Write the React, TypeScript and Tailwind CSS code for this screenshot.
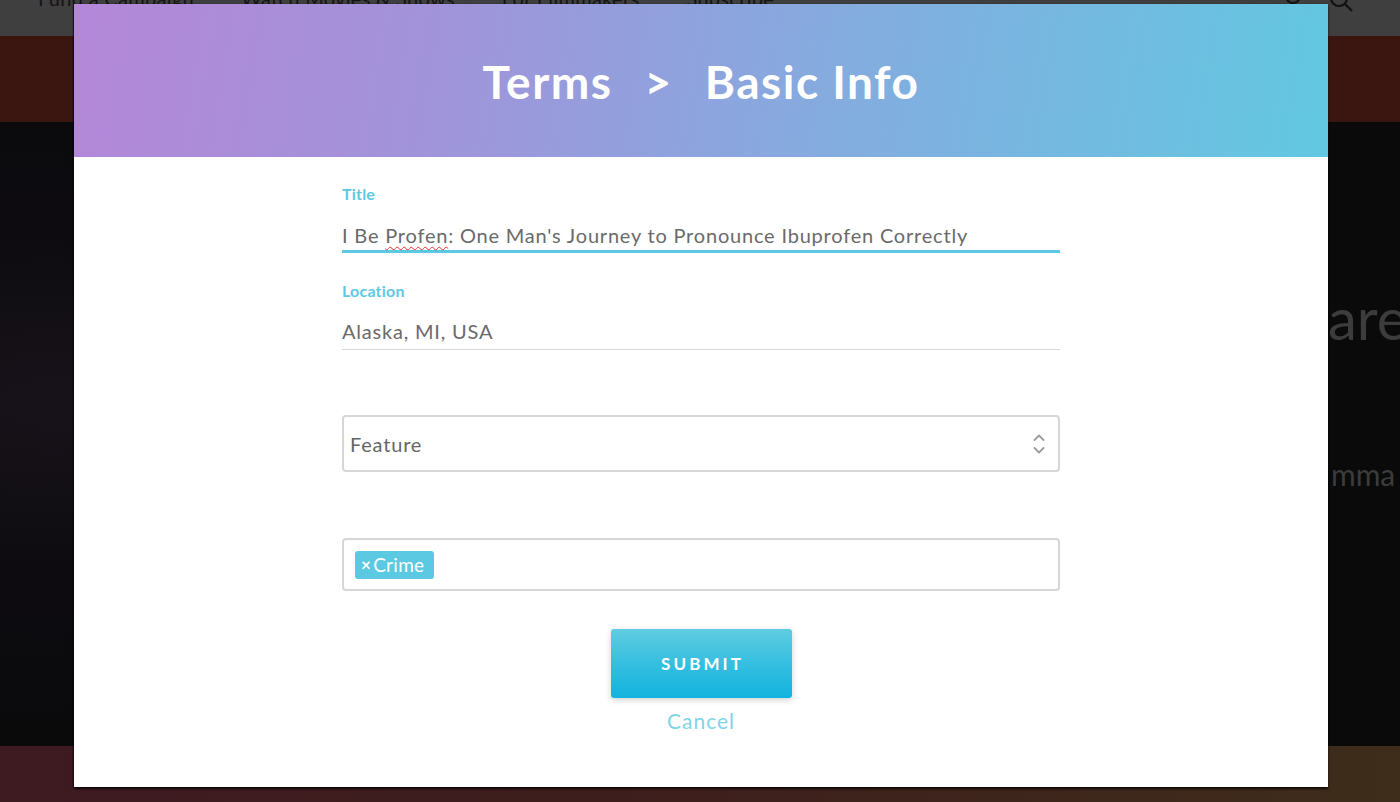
import React from "react";

function Chevrons() {
  return (
    <svg width="14" height="24" viewBox="0 0 14 24" fill="none" stroke="#9a9a9a" strokeWidth="1.8" strokeLinecap="round" strokeLinejoin="round">
      <path d="M2.5 8 L7 3.5 L11.5 8" />
      <path d="M2.5 16 L7 20.5 L11.5 16" />
    </svg>
  );
}

export default function App() {
  return (
    <div className="relative w-[1400px] h-[802px] overflow-hidden bg-[#0b0a0d] [font-family:Lato,'Open_Sans',sans-serif]">
      {/* background page (dimmed) */}
      <div className="flex flex-col h-full">
        <div className="h-[36px] bg-[#3f3f3f] flex items-start text-[20px] tracking-[0.3px] text-[#141414] leading-[24px] shrink-0">
          <div className="flex -mt-[14px] pl-[38px] gap-[47px] whitespace-nowrap">
            <span>Fund a Campaign</span>
            <span>Watch Movies &amp; Shows</span>
            <span>For Filmmakers</span>
            <span>Subscribe</span>
          </div>
          <div className="ml-auto flex items-start gap-[24px] pr-[44px] -mt-[9px]">
            <svg width="22" height="22" viewBox="0 0 22 22" fill="none" stroke="#111" strokeWidth="2">
              <circle cx="11" cy="5" r="7" />
            </svg>
            <svg width="28" height="26" viewBox="0 0 28 26" fill="none" stroke="#111" strokeWidth="2.2">
              <circle cx="11" cy="7" r="8" />
              <path d="M17 13 L24 20" />
            </svg>
          </div>
        </div>
        <div className="h-[86px] bg-[#3b1610] shrink-0" />
        <div className="flex-1 relative bg-[radial-gradient(ellipse_at_8%_45%,#18131a_0%,#0d0b10_35%,#0a0a0b_70%)] flex flex-col text-[#3c3c3c] whitespace-nowrap">
          <div className="pl-[1328px] mt-[161px] text-[58px] leading-[70px]">are</div>
          <div className="pl-[1331px] mt-[103px] text-[30px] leading-[36px]">mma</div>
        </div>
        <div className="h-[56px] bg-[linear-gradient(90deg,#3e1a21_0%,#3e1f1c_50%,#3e2d1b_100%)] shrink-0" />
      </div>

      {/* modal */}
      <div className="absolute left-[74px] top-[4px] w-[1254px] h-[783px] bg-white flex flex-col shadow-[0_2px_2px_rgba(0,0,0,0.75),-1px_0_1px_rgba(0,0,0,0.5)]">
        <div className="h-[153px] shrink-0 flex items-center justify-center bg-[linear-gradient(100deg,#b487d9_0%,#a094da_30%,#85abdf_60%,#62c8e1_100%)] text-white font-bold text-[46px] leading-none tracking-[1.5px] pt-[2px]">
          <span>Terms</span>
          <span className="mx-[32px]">&gt;</span>
          <span>Basic Info</span>
        </div>

        <div className="w-[718px] mx-auto flex flex-col pt-[29px] tracking-[0.8px]">
          <div className="text-[16px] leading-[16px] font-bold text-[#5ec8e2] tracking-[0.2px]">Title</div>
          <div className="mt-[18px] h-[33px] border-b-[3px] border-[#5bc9e2] text-[20px] leading-[30px] text-[#6a6a6a] whitespace-nowrap">
            I Be <span className="underline decoration-wavy decoration-[#e53030] decoration-1 underline-offset-[3px]">Profen</span>: One Man's Journey to Pronounce Ibuprofen Correctly
          </div>

          <div className="mt-[30px] text-[16px] leading-[16px] font-bold text-[#5ec8e2] tracking-[0.2px]">Location</div>
          <div className="mt-[17px] h-[34px] border-b border-[#d6d9dc] text-[20px] leading-[30px] text-[#6a6a6a]">
            Alaska, MI, USA
          </div>

          <div className="mt-[65px] h-[57px] border-2 border-[#d4d6d8] rounded-[4px] flex items-center pl-[6px] pr-[12px] text-[20px] text-[#666]">
            <span>Feature</span>
            <span className="ml-auto flex items-center">
              <Chevrons />
            </span>
          </div>

          <div className="mt-[66px] h-[53px] border-2 border-[#d4d6d8] rounded-[4px] flex items-center pl-[11px]">
            <span className="h-[28px] w-[79px] bg-[#5bc9e1] rounded-[3px] flex items-center pl-[6px] text-white text-[19px] leading-none tracking-[0.3px]">
              <span className="font-bold text-[17px] mr-[2px]">×</span>Crime
            </span>
          </div>

          <div className="mt-[38px] flex flex-col items-center">
            <button className="w-[181px] h-[69px] rounded-[3px] bg-[linear-gradient(180deg,#60cce1_0%,#35bfe0_50%,#12b3df_100%)] text-white font-bold text-[17px] tracking-[0.18em] shadow-[0_2px_6px_rgba(0,0,0,0.18)] pl-[3px]">
              SUBMIT
            </button>
            <div className="mt-[11px] text-[21px] leading-[24px] text-[#80d4e8] tracking-[1px]">Cancel</div>
          </div>
        </div>
      </div>
    </div>
  );
}
